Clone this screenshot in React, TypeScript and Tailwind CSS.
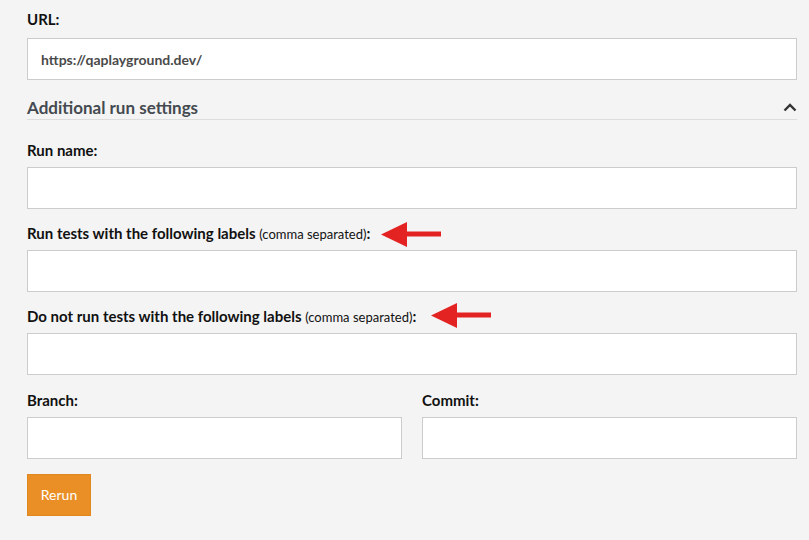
const Arrow = () => (
  <svg width="60" height="25" viewBox="0 0 60 25" className="shrink-0">
    <polygon points="0,12.5 26,0 26,25" fill="#e32322" />
    <rect x="25" y="9.5" width="35" height="5" fill="#e32322" />
  </svg>
);

const ChevronUp = () => (
  <svg width="14" height="9" viewBox="0 0 14 9" fill="none">
    <polyline points="1.5,7.5 7,2 12.5,7.5" stroke="#333" strokeWidth="2.4" />
  </svg>
);

const Field = ({ className = '' }: { className?: string }) => (
  <input
    type="text"
    className={`block w-full h-[42px] bg-white border border-[#cccccc] px-[13px] outline-none ${className}`}
  />
);

const App = () => {
  return (
    <div className="min-h-screen bg-[#f4f4f4] pl-[27px] pr-[12px] pt-[9px] font-['Lato',sans-serif] text-[#111]">
      {/* URL */}
      <label className="block text-[15px] leading-5 font-bold mb-[9px]">URL:</label>
      <input
        type="text"
        readOnly
        value="https://qaplayground.dev/"
        className="block w-full h-[42px] bg-white border border-[#cccccc] px-[13px] text-sm font-bold text-[#4a4a4a] outline-none"
      />

      {/* Additional settings */}
      <div className="mt-[14px] flex items-center justify-between border-b border-[#dddddd] h-[26px] pt-[2px]">
        <h2 className="text-[17px] leading-6 font-bold text-[#444a50]">Additional run settings</h2>
        <ChevronUp />
      </div>

      <div className="mt-[20px]">
        <label className="block text-[15px] leading-5 font-bold mb-[7px]">Run name:</label>
        <Field />

        <label className="mt-[14px] flex items-center h-5 text-[15px] font-bold mb-[7px]">
          <span>
            Run tests with the following labels <span className="text-[13px] font-normal">(comma separated)</span>:
          </span>
          <span className="ml-[11px] mt-[2px]">
            <Arrow />
          </span>
        </label>
        <Field />

        <label className="mt-[14px] flex items-center h-5 text-[15px] font-bold mb-[7px]">
          <span>
            Do not run tests with the following labels <span className="text-[13px] font-normal">(comma separated)</span>:
          </span>
          <span className="ml-[15px] -mt-[2px]">
            <Arrow />
          </span>
        </label>
        <Field />

        <div className="mt-[15px] grid grid-cols-2 gap-x-[20px]">
          <div>
            <label className="block text-[15px] leading-5 font-bold mb-[7px]">Branch:</label>
            <Field />
          </div>
          <div>
            <label className="block text-[15px] leading-5 font-bold mb-[7px]">Commit:</label>
            <Field />
          </div>
        </div>

        <button className="mt-[15px] h-[42px] w-[64px] bg-[#e98f26] border border-[#e08820] text-white text-sm">
          Rerun
        </button>
      </div>
    </div>
  );
};

export default App;
